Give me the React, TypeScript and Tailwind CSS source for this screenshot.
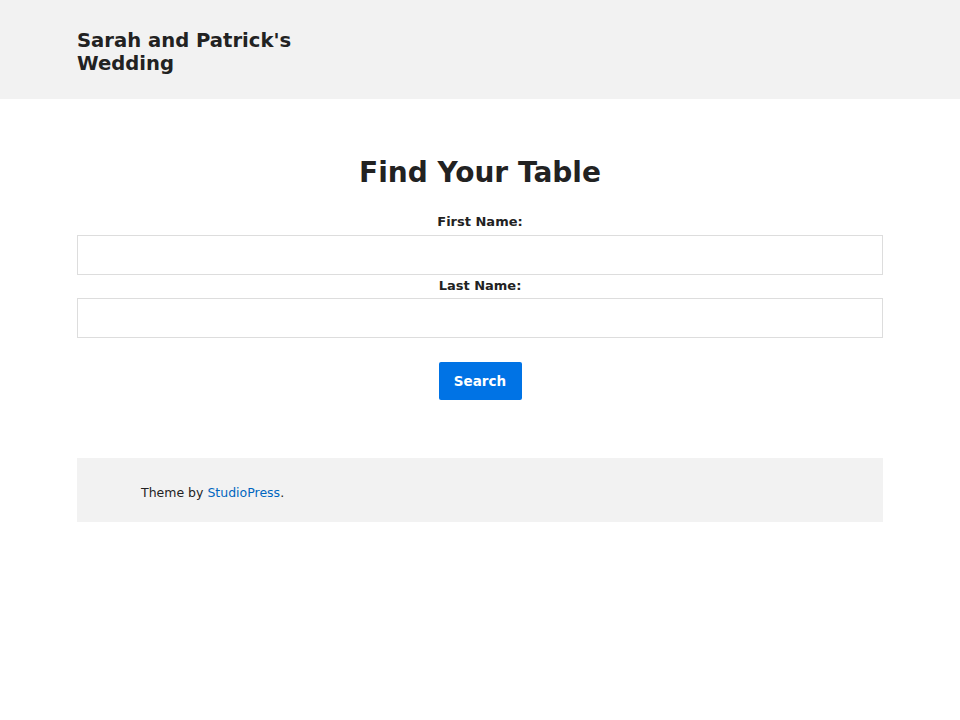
export default function App() {
  return (
    <div className="min-h-[720px] bg-white text-[#222] font-['DejaVu_Sans',sans-serif]">
      <header className="h-[99px] bg-[#f2f2f2]">
        <div className="mx-[77px] pt-[29px]">
          <h1 className="w-[240px] text-[19.6px] font-bold leading-[23px] text-[#222]">Sarah and Patrick's Wedding</h1>
        </div>
      </header>
      <main className="mx-[77px] pt-[56px]">
        <h2 className="text-center text-[28px] font-bold leading-[36px] text-[#222]">Find Your Table</h2>
        <form className="mt-[23px] flex flex-col">
          <label className="text-center text-[13px] font-bold leading-[16px]">First Name:</label>
          <input className="mt-[5px] h-[40px] w-full border border-[#ddd] bg-white" />
          <label className="mt-[3px] text-center text-[13px] font-bold leading-[16px]">Last Name:</label>
          <input className="mt-[4px] h-[40px] w-full border border-[#ddd] bg-white" />
          <div className="mt-[24px] flex justify-center">
            <button type="button" className="h-[38px] w-[83px] rounded-[2px] bg-[#0073e5] text-[13.5px] font-bold text-white">Search</button>
          </div>
        </form>
        <footer className="mt-[58px] h-[64px] bg-[#f2f2f2] pl-[64px] pt-[27px]">
          <p className="text-[12.5px] leading-[16px] text-[#222]">
            Theme by <a className="text-[#0066bf]">StudioPress</a>.
          </p>
        </footer>
      </main>
    </div>
  );
}
